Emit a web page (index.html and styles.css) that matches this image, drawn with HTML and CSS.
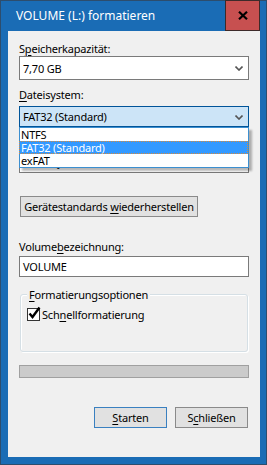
FILE: index.html
```html
<!DOCTYPE html>
<html lang="de">
<head>
<meta charset="utf-8">
<title>VOLUME (L:) formatieren</title>
<link rel="stylesheet" href="styles.css">
</head>
<body>
<div class="window">
  <div class="titlebar">
    <span class="title">VOLUME (L:) formatieren</span>
    <button class="close" aria-label="Schließen">
      <svg width="10" height="9" viewBox="0 0 10 9"><path d="M1 0.8 L9 8.2 M9 0.8 L1 8.2" stroke="#000" stroke-width="2.2" fill="none"/></svg>
    </button>
  </div>
  <div class="content">
    <div class="label l-cap">S<u>p</u>eicherkapazität:</div>
    <div class="combo c-cap">
      <span class="combo-text">7,70 GB</span>
      <svg class="chev" width="8" height="5" viewBox="0 0 8 5"><path d="M0.5 0.5 L4 4 L7.5 0.5" stroke="#555" stroke-width="1.6" fill="none"/></svg>
    </div>
    <div class="label l-fs"><u>D</u>ateisystem:</div>
    <div class="combo combo-focus c-fs">
      <span class="combo-text">FAT32 (Standard)</span>
      <svg class="chev" width="8" height="5" viewBox="0 0 8 5"><path d="M0.5 0.5 L4 4 L7.5 0.5" stroke="#555" stroke-width="1.6" fill="none"/></svg>
      <ul class="droplist">
        <li>NTFS</li>
        <li class="sel">FAT32 (Standard)</li>
        <li>exFAT</li>
      </ul>
    </div>
    <div class="label l-au"><u>G</u>röße der Zuordnungseinheit</div>
    <div class="combo c-au">
      <span class="combo-text">4096 Bytes</span>
      <svg class="chev" width="8" height="5" viewBox="0 0 8 5"><path d="M0.5 0.5 L4 4 L7.5 0.5" stroke="#555" stroke-width="1.6" fill="none"/></svg>
    </div>
    <button class="btn btn-reset">Gerätestandards <u>w</u>iederherstellen</button>
    <div class="label l-vol">Volume<u>b</u>ezeichnung:</div>
    <div class="textbox">VOLUME</div>
    <div class="group">
      <span class="legend"><u>F</u>ormatierungsoptionen</span>
      <div class="check-row">
        <span class="checkbox">
          <svg width="15" height="15" viewBox="0 0 15 15"><path d="M2.5 7.5 L5.5 11 L12.5 1.5" stroke="#000" stroke-width="2.4" fill="none"/></svg>
        </span>
        <span class="check-label">Sch<u>n</u>ellformatierung</span>
      </div>
    </div>
    <div class="progress"></div>
    <div class="actions">
      <button class="btn btn-default"><u>S</u>tarten</button>
      <button class="btn">S<u>c</u>hließen</button>
    </div>
  </div>
</div>
</body>
</html>
```

FILE: styles.css
```css
* { box-sizing: border-box; }
html, body { margin: 0; padding: 0; }
body {
  width: 267px;
  height: 465px;
  overflow: hidden;
  font-family: "Noto Sans", "Open Sans", sans-serif;
  font-size: 11px;
  letter-spacing: -0.2px;
  line-height: 15px;
  color: #000;
}
u { text-decoration-thickness: 1px; text-underline-offset: 2px; }
.window {
  width: 267px;
  height: 465px;
  background: #1a6cb5;
  border: 1px solid #2d4d6d;
  display: flex;
  flex-direction: column;
}
.titlebar {
  height: 30px;
  display: flex;
  align-items: flex-start;
  justify-content: space-between;
  padding-right: 6px;
}
.title {
  color: #fff;
  padding: 7px 0 0 15px;
  line-height: 15px;
  font-size: 12px;
  letter-spacing: 0;
}
.close {
  width: 35px;
  height: 31px;
  margin-top: -1px;
  background: #c75050;
  border: 1px solid #3d2a2a;
  padding: 0;
  display: flex;
  align-items: center;
  justify-content: center;
}
.content {
  flex: 1;
  margin: 0 6px 7px 7px;
  background: #f0f0f0;
  padding: 10px 10px 0 11px;
  display: flex;
  flex-direction: column;
  align-items: flex-start;
}
.label { height: 15px; white-space: nowrap; }
.l-fs { margin-top: 7px; }
.l-au { margin-top: 4px; }
.l-vol { margin-top: 22px; }
.combo {
  position: relative;
  width: 230px;
  height: 24px;
  background: #fff;
  border: 1px solid #7a7a7a;
  display: flex;
  align-items: center;
  padding-left: 3px;
}
.combo-focus {
  height: 21px;
  margin-top: 4px;
  background: #cce4f7;
  border-color: #005499;
}
.c-au { height: 23px; margin-top: 4px; }
.combo-text { white-space: nowrap; }
.chev { position: absolute; right: 5px; top: 50%; margin-top: -2px; }
.droplist {
  position: absolute;
  left: -1px;
  top: 20px;
  width: 230px;
  margin: 0;
  padding: 0;
  list-style: none;
  background: #fff;
  border: 1px solid #3c8fd0;
  box-shadow: 3px 3px 2px rgba(0,0,0,0.28);
  z-index: 2;
}
.droplist li {
  height: 13px;
  line-height: 12px;
  padding-left: 1px;
  white-space: nowrap;
  border: 1px solid transparent;
  margin-left: -1px;
}
.droplist li.sel {
  background: #3399ff;
  color: #fff;
  border: 1px dotted #d88a3a;
}
.btn {
  font: inherit;
  letter-spacing: inherit;
  line-height: 15px;
  color: #000;
  background: #e1e1e1;
  border: 1px solid #8a8a8a;
  padding: 0;
  height: 21px;
  white-space: nowrap;
}
.btn-reset {
  margin-top: 23px;
  margin-left: 1px;
  width: 178px;
  height: 21px;
}
.textbox {
  margin-top: 2px;
  width: 230px;
  height: 21px;
  background: #fff;
  border: 1px solid #7a7a7a;
  padding-left: 3px;
  line-height: 19px;
}
.group {
  position: relative;
  margin-top: 17px;
  margin-left: 1px;
  width: 228px;
  height: 58px;
  border: 1px solid #d5dfe5;
  border-radius: 3px;
  box-shadow: inset 1px 1px 0 #fff, 1px 1px 0 #fff;
  padding: 12px 0 0 6px;
}
.legend {
  position: absolute;
  left: 6px;
  top: -8px;
  padding: 0 2px;
  background: #f0f0f0;
  white-space: nowrap;
}
.check-row {
  display: flex;
  align-items: center;
  height: 15px;
}
.checkbox {
  position: relative;
  width: 13px;
  height: 13px;
  background: #fff;
  border: 1px solid #333;
  flex: none;
}
.checkbox svg { position: absolute; left: -1px; top: -3px; }
.check-label { margin-left: 2px; white-space: nowrap; }
.progress {
  margin-top: 13px;
  width: 230px;
  height: 13px;
  background: #cbcbcb;
  border: 1px solid #a0a0a0;
}
.actions {
  margin-top: 29px;
  align-self: stretch;
  display: flex;
  justify-content: flex-end;
  gap: 8px;
  padding-right: 2px;
}
.actions .btn { width: 73px; }
.btn-default { border-color: #3a80c0; }
```
